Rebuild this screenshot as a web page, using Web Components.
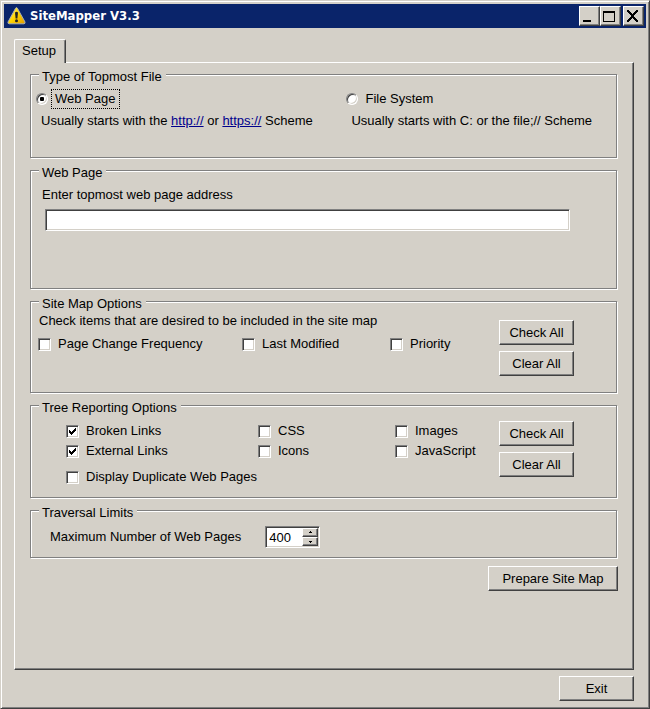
<!DOCTYPE html>
<html lang="en">
<head>
<meta charset="utf-8">
<title>SiteMapper V3.3</title>
<style>
  :root {
    --face: #d4d0c8;
    --light: #ffffff;
    --shade: #808080;
    --dark: #404040;
    --caption: #0a246a;
    --link: #00008c;
  }
  * { box-sizing: border-box; }
  body {
    margin: 0;
    min-height: 100vh;
    display: grid;
    background: var(--face);
    color: #000;
    font: 13px/16px "Liberation Sans", Arial, sans-serif;
  }
  a { color: var(--link); text-decoration: underline; }
  p { margin: 0; }
  .sources { display: grid; grid-template-columns: 311fr 270fr; row-gap: 5px; padding: 5px 0 0 5px; }
  .sources p { padding-left: 5px; }
  .options { display: flex; justify-content: space-between; align-items: flex-start; padding-right: 42px; }
  .options > div:first-child { flex: 1; }
  .buttons { display: grid; gap: 6px; width: 75px; }
  .map-buttons { padding-top: 8px; }
  .tree-buttons { padding-top: 5px; }
  .map-options { padding: 1px 0 0 7px; }
  .map-options p { padding-left: 1px; }
  .map-checks { display: grid; grid-template-columns: 204fr 148fr 109fr; padding-top: 7px; }
  .tree-checks { display: grid; grid-template-columns: 192fr 137fr 104fr; row-gap: 4px; padding: 7px 0 0 35px; }
  .tree-checks .wide { grid-column: 1 / -1; margin-top: 6px; }
  .limits { padding: 5px 0 0 19px; }
  .address { padding: 6px 46px 0 11px; }
</style>
</head>
<body>

<sm-window caption="SiteMapper V3.3">
  <sm-tab-panel caption="Setup">
    <sm-group caption="Type of Topmost File" style="--room: 94px">
      <div class="sources">
        <sm-radio checked focused>Web Page</sm-radio>
        <sm-radio>File System</sm-radio>
        <p>Usually starts with the <a href="http://">http://</a> or <a href="https://">https://</a> Scheme</p>
        <p>Usually starts with C: or the file;// Scheme</p>
      </div>
    </sm-group>

    <sm-group caption="Web Page" style="--room: 129px">
      <div class="address"><sm-text-field>Enter topmost web page address</sm-text-field></div>
    </sm-group>

    <sm-group caption="Site Map Options" style="--room: 102px">
      <div class="options">
        <div class="map-options">
          <p>Check items that are desired to be included in the site map</p>
          <div class="map-checks">
            <sm-check>Page Change Frequency</sm-check>
            <sm-check>Last Modified</sm-check>
            <sm-check>Priority</sm-check>
          </div>
        </div>
        <div class="buttons map-buttons">
          <sm-button>Check All</sm-button>
          <sm-button>Clear All</sm-button>
        </div>
      </div>
    </sm-group>

    <sm-group caption="Tree Reporting Options" style="--room: 103px">
      <div class="options">
        <div class="tree-checks">
          <sm-check checked>Broken Links</sm-check>
          <sm-check>CSS</sm-check>
          <sm-check>Images</sm-check>
          <sm-check checked>External Links</sm-check>
          <sm-check>Icons</sm-check>
          <sm-check>JavaScript</sm-check>
          <sm-check class="wide">Display Duplicate Web Pages</sm-check>
        </div>
        <div class="buttons tree-buttons">
          <sm-button>Check All</sm-button>
          <sm-button>Clear All</sm-button>
        </div>
      </div>
    </sm-group>

    <sm-group caption="Traversal Limits" style="--room: 58px">
      <div class="limits"><sm-spinner value="400">Maximum Number of Web Pages</sm-spinner></div>
    </sm-group>

    <sm-button slot="actions" style="width: 130px">Prepare Site Map</sm-button>
  </sm-tab-panel>
  <sm-button slot="footer" style="width: 75px">Exit</sm-button>
</sm-window>

<script>
  class Base extends HTMLElement {
    constructor() {
      super();
      this.attachShadow({ mode: "open" });
    }
    render(css, html) {
      this.shadowRoot.innerHTML =
        `<style>*{box-sizing:border-box}:host{display:block}${css}</style>${html}`;
    }
    $(selector) { return this.shadowRoot.querySelector(selector); }
  }

  const raised = `
    border: 1px solid; border-color: var(--light) var(--dark) var(--dark) var(--light);
    box-shadow: inset -1px -1px 0 var(--shade);
    background: var(--face); color: inherit; font: inherit; padding: 0; margin: 0;`;
  const sunken = `
    appearance: none; margin: 0; outline: 0; background: #fff;
    border: 1px solid; border-color: var(--shade) var(--light) var(--light) var(--shade);
    box-shadow: inset 1px 1px 0 var(--dark), inset -1px -1px 0 var(--face);`;

  customElements.define("sm-window", class extends Base {
    connectedCallback() {
      this.render(`
        :host { display: flex; flex-direction: column; background: var(--face);
          border: 1px solid; border-color: var(--face) var(--dark) var(--dark) var(--face);
          box-shadow: inset 1px 1px 0 var(--light), inset -1px -1px 0 var(--shade);
          padding: 3px 3px 7px 3px; }
        main { flex: 1; display: flex; padding: 11px 12px 0 10px; }
        ::slotted(sm-tab-panel) { flex: 1; }
        footer { display: flex; justify-content: flex-end; padding: 6px 12px 0 0; }
      `, `
        <sm-title-bar caption="${this.getAttribute("caption")}"></sm-title-bar>
        <main><slot></slot></main>
        <footer><slot name="footer"></slot></footer>`);
    }
  });

  customElements.define("sm-title-bar", class extends Base {
    connectedCallback() {
      this.render(`
        :host { display: flex; align-items: center; height: 24px; padding: 0 2px 0 3px;
          background: var(--caption); color: #fff; }
        svg { display: block; }
        h1 { flex: 1; margin: 0 0 0 4px; font: bold 13px/16px "DejaVu Sans Condensed", "Noto Sans", sans-serif; }
        button { ${raised} display: grid; place-items: center; width: 21px; height: 20px; color: #000; }
        button:last-child { margin-left: 2px; }
      `, `
        <svg width="19" height="18" viewBox="0 0 19 18" aria-hidden="true">
          <defs><linearGradient id="g" x1="0" y1="0" x2="1" y2="1">
            <stop offset="0" stop-color="#fff27a"/><stop offset=".5" stop-color="#ffd400"/><stop offset="1" stop-color="#e09a00"/>
          </linearGradient></defs>
          <path d="M8.6 1.2Q9.5 0 10.4 1.2L18 15Q18.4 16.6 17 16.8H2Q.6 16.6 1 15Z" fill="url(#g)" stroke="#a9aeb4" stroke-width="1"/>
          <path d="M8 5.4Q9.5 4.2 11 5.4L10.4 11.6H8.6Z" fill="#222"/>
          <circle cx="9.5" cy="13.8" r="1.5" fill="#222"/>
        </svg>
        <h1>${this.getAttribute("caption")}</h1>
        <button aria-label="Minimize"><svg width="19" height="18" shape-rendering="crispEdges"><path d="M3 13h8v2H3z"/></svg></button>
        <button aria-label="Maximize"><svg width="19" height="18" shape-rendering="crispEdges"><path fill-rule="evenodd" d="M2 4h12v11H2zM3 6v8h10V6z"/></svg></button>
        <button aria-label="Close"><svg width="19" height="18" shape-rendering="crispEdges">
          <path d="M3 3h2v1h1v1h1v1h1v1h1v-1h1v-1h1v-1h1v-1h2v2h-1v1h-1v1h-1v1h-1v2h1v1h1v1h1v1h1v2h-2v-1h-1v-1h-1v-1h-1v-1H8v1H7v1H6v1H5v1H3v-2h1v-1h1v-1h1v-1h1V8H6V7H5V6H4V5H3z"/></svg></button>`);
    }
  });

  customElements.define("sm-tab-panel", class extends Base {
    connectedCallback() {
      this.render(`
        :host { display: flex; flex-direction: column; }
        .tabs { display: flex; position: relative; z-index: 1; margin-bottom: -1px; }
        .tab { border: 1px solid; border-color: var(--light) var(--dark) transparent var(--light);
          border-bottom: 0; border-radius: 2px 2px 0 0; box-shadow: inset -1px 0 0 var(--shade);
          background: var(--face); color: inherit; font: inherit; margin: 0; padding: 3px 9px 5px 7px; height: 24px; }
        .panel { flex: 1; border: 1px solid; border-color: var(--light) var(--dark) var(--dark) var(--light);
          box-shadow: inset -1px -1px 0 var(--shade); padding: 1px 15px 8px 15px; }
        .groups { display: grid; gap: 2px; }
        .actions { display: flex; justify-content: flex-end; padding-top: 8px; }
      `, `
        <div class="tabs" role="tablist"><button class="tab" role="tab" aria-selected="true">${this.getAttribute("caption")}</button></div>
        <div class="panel" role="tabpanel">
          <div class="groups"><slot></slot></div>
          <div class="actions"><slot name="actions"></slot></div>
        </div>`);
    }
  });

  customElements.define("sm-group", class extends Base {
    connectedCallback() {
      this.render(`
        fieldset { margin: 0 1px 0 0; padding: 0; min-width: 0; min-height: var(--room);
          border: 1px solid var(--shade);
          box-shadow: 1px 1px 0 var(--light), inset 1px 1px 0 var(--light); }
        legend { margin-left: 8px; padding: 5px 4px 0 3px; background: var(--face); }
      `, `<fieldset><legend>${this.getAttribute("caption")}</legend><slot></slot></fieldset>`);
    }
  });

  customElements.define("sm-button", class extends Base {
    connectedCallback() {
      this.render(`button { ${raised} display: block; width: 100%; height: 25px; }`,
        `<button type="button"><slot></slot></button>`);
    }
  });

  customElements.define("sm-check", class extends Base {
    connectedCallback() {
      this.render(`
        label { display: flex; width: fit-content; align-items: center; gap: 7px; white-space: nowrap; }
        .box { display: grid; }
        .box > * { grid-area: 1 / 1; }
        input { ${sunken} width: 13px; height: 13px; }
        svg { display: none; pointer-events: none; z-index: 1; }
        input:checked + svg { display: block; }
      `, `
        <label><span class="box"><input type="checkbox">
          <svg width="13" height="13" shape-rendering="crispEdges" aria-hidden="true"><path d="M3 5h1v1h1v1h1V6h1V5h1V4h1V3h1v3H9v1H8v1H7v1H6v1H5V9H4V8H3z"/></svg></span>
          <span><slot></slot></span></label>`);
      this.$("input").checked = this.hasAttribute("checked");
    }
  });

  customElements.define("sm-radio", class extends Base {
    connectedCallback() {
      this.render(`
        label { display: flex; width: fit-content; align-items: center; gap: 4px; white-space: nowrap; }
        .box { display: grid; place-items: center; }
        .box > * { grid-area: 1 / 1; }
        input { ${sunken} width: 12px; height: 12px; border-radius: 50%; }
        i { display: none; z-index: 1; width: 4px; height: 4px; border-radius: 1px; background: #000; pointer-events: none; }
        input:checked + i { display: block; }
        .text { padding: 1px 4px 1px 3px; outline: 1px dotted transparent; }
        :host([focused]) .text { outline-color: #000; }
      `, `<label><span class="box"><input type="radio"><i></i></span><span class="text"><slot></slot></span></label>`);
      const input = this.$("input");
      input.checked = this.hasAttribute("checked");
      input.addEventListener("change", () => {
        for (const other of this.parentElement.querySelectorAll("sm-radio")) {
          other.$("input").checked = other === this;
          other.toggleAttribute("focused", other === this);
        }
      });
    }
  });

  customElements.define("sm-text-field", class extends Base {
    connectedCallback() {
      this.render(`
        label { display: block; }
        .box { padding: 6px 0 0 3px; }
        input { ${sunken} display: block; width: 100%; height: 22px; padding: 2px 4px; font: inherit; }
      `, `<label for="field"><slot></slot></label><div class="box"><input id="field" type="text"></div>`);
    }
  });

  customElements.define("sm-spinner", class extends Base {
    connectedCallback() {
      this.render(`
        :host { display: flex; align-items: center; gap: 24px; }
        .box { ${sunken} display: flex; width: 55px; height: 22px; padding: 1px; }
        input { appearance: textfield; flex: 1; min-width: 0; border: 0; outline: 0; margin: 0; padding: 2px 0 0 2px;
          background: transparent; font: inherit; color: inherit; }
        input::-webkit-inner-spin-button { appearance: none; display: none; }
        .arrows { display: grid; grid-template-rows: 1fr 1fr; width: 16px; }
        button { ${raised} display: grid; place-items: center; min-height: 0; }
        svg { display: block; }
      `, `
        <label for="count"><slot></slot></label>
        <span class="box"><input id="count" type="number" value="${this.getAttribute("value")}">
          <span class="arrows">
            <button type="button" aria-label="Increase"><svg width="5" height="3" shape-rendering="crispEdges"><path d="M2 0h1v1h1v1H1V1h1z"/></svg></button>
            <button type="button" aria-label="Decrease"><svg width="5" height="3" shape-rendering="crispEdges"><path d="M1 1h3v1H3v1H2V2H1z"/></svg></button>
          </span></span>`);
      const [up, down] = this.shadowRoot.querySelectorAll("button");
      up.addEventListener("click", () => this.$("input").stepUp());
      down.addEventListener("click", () => this.$("input").stepDown());
    }
  });
</script>
</body>
</html>
